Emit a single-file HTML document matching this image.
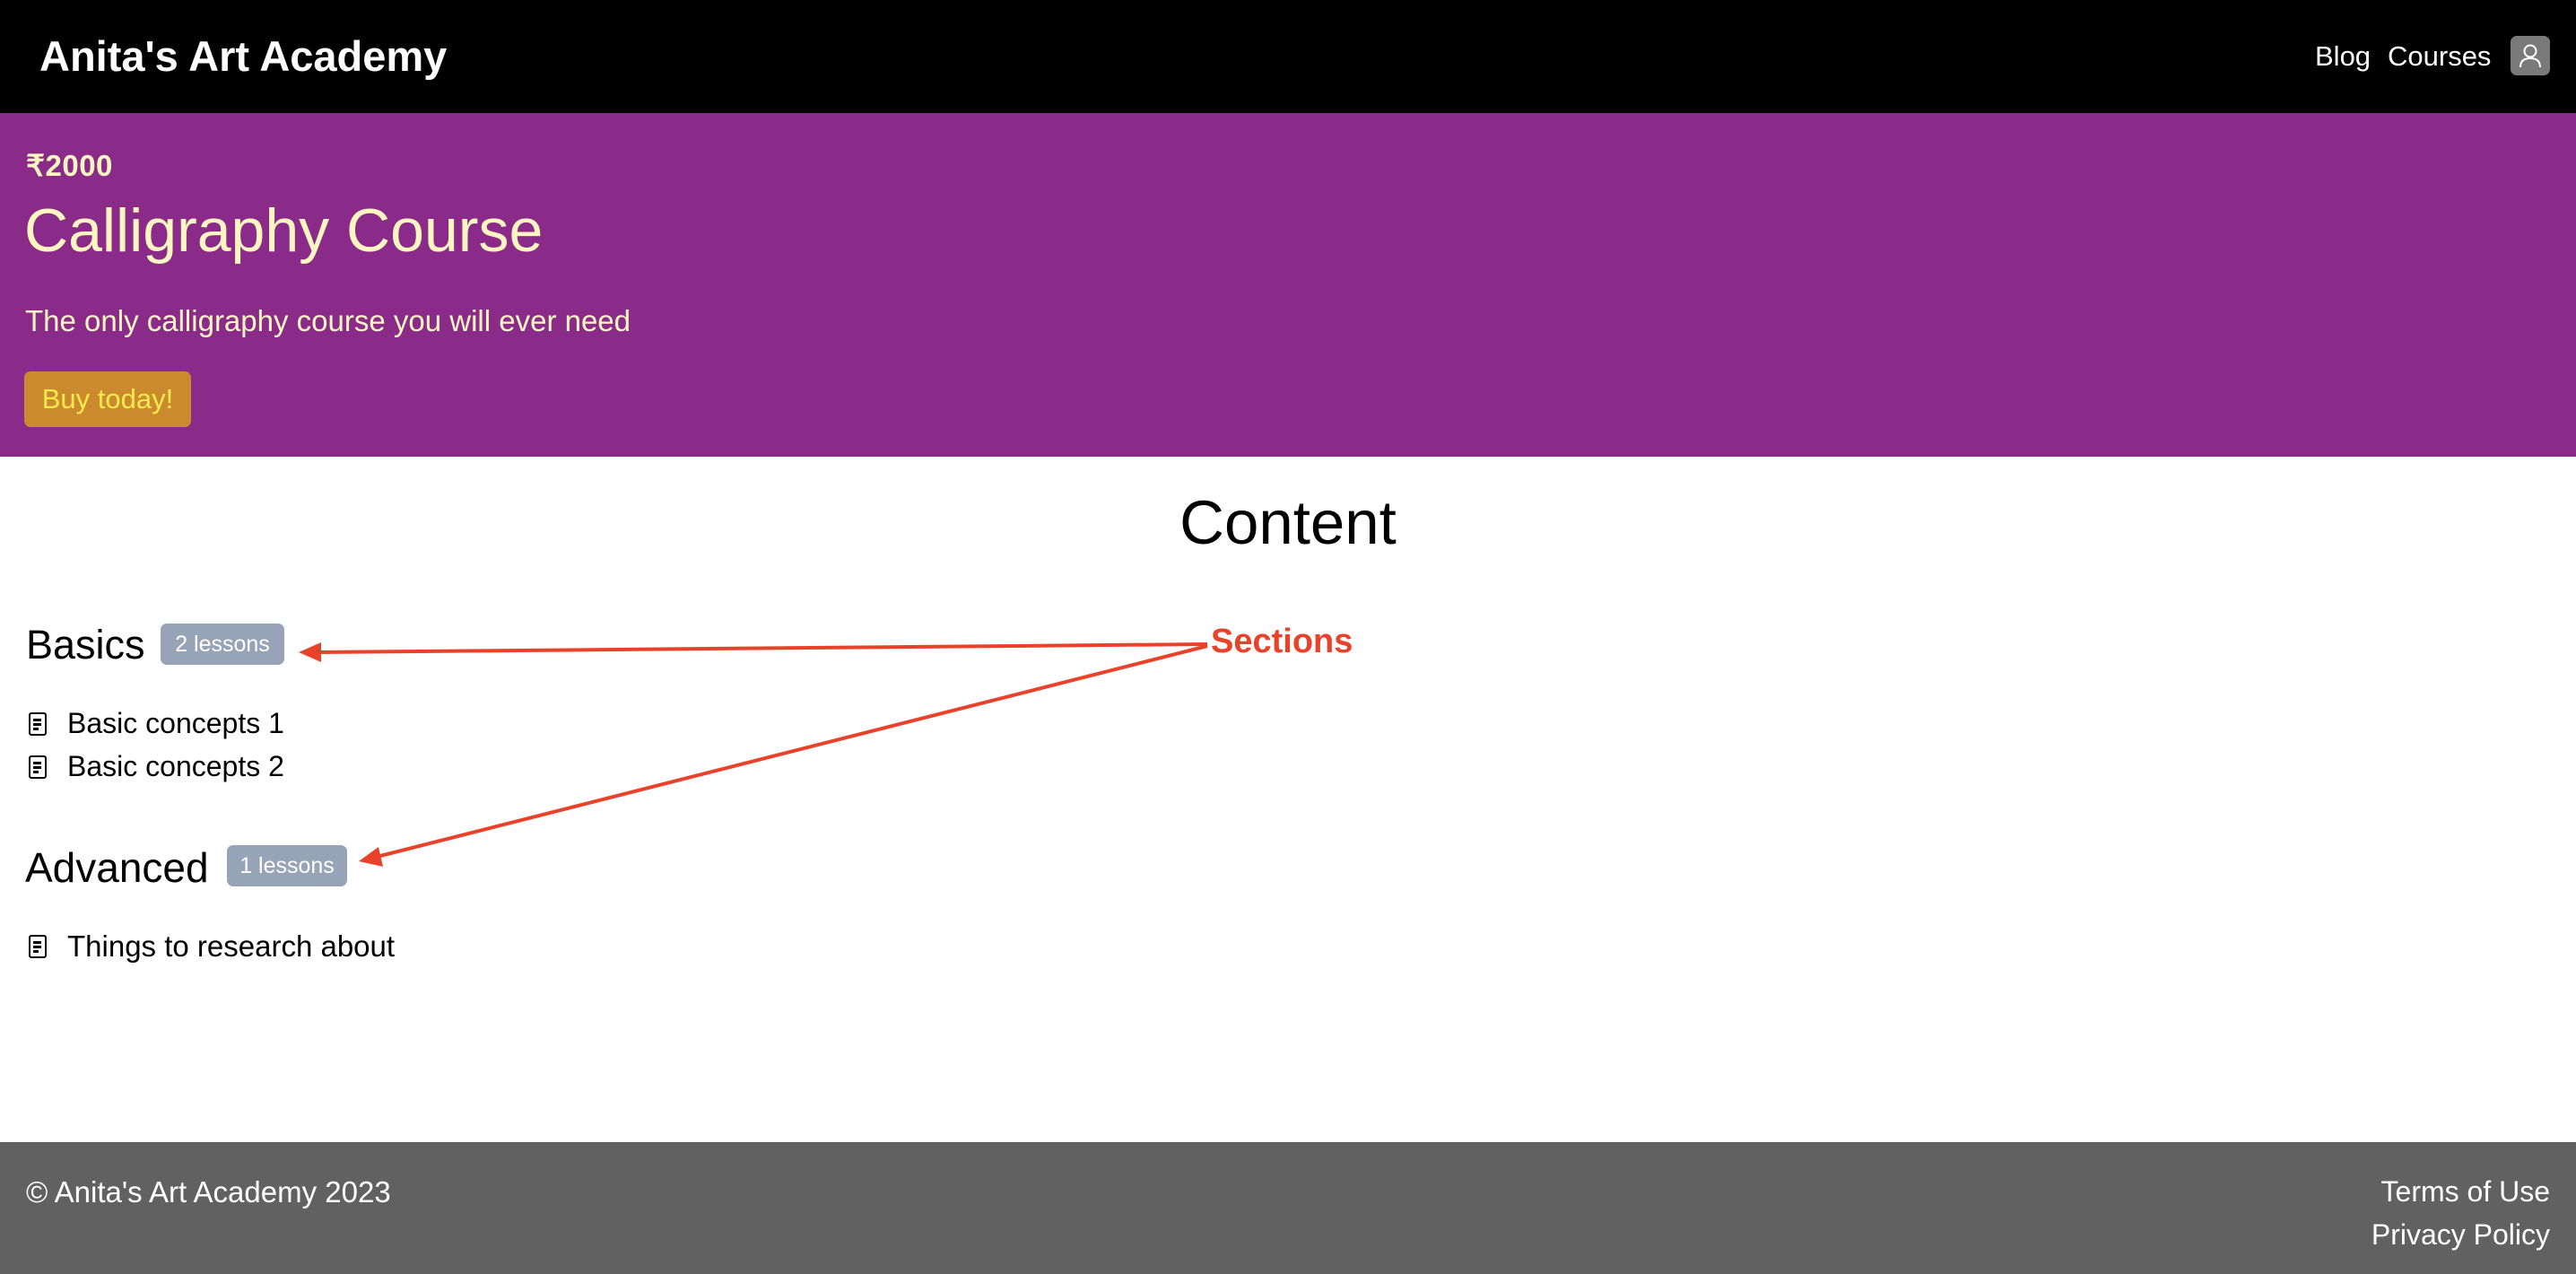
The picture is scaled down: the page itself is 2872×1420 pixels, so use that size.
<!DOCTYPE html>
<html><head><meta charset="utf-8"><style>
*{margin:0;padding:0;box-sizing:border-box}
body{width:2872px;height:1420px;overflow:hidden;background:#fff;font-family:"Liberation Sans",Arial,sans-serif;position:relative}
.abs{position:absolute;white-space:nowrap}
nav{position:absolute;left:0;top:0;width:2872px;height:126px;background:#000}
.hero{position:absolute;left:0;top:126px;width:2872px;height:383px;background:#8a2b8a}
footer{position:absolute;left:0;top:1273px;width:2872px;height:147px;background:#616161}
.badge{position:absolute;background:#97a3b6;color:#fff;border-radius:7px;font-size:25px;display:flex;align-items:center;justify-content:center}
.doc{position:absolute;width:20px;height:26px;border:2.5px solid #000;border-radius:3px}
.doc i{position:absolute;left:3px;height:2.5px;background:#000}
</style></head><body>
<nav>
<div class="abs" style="left:44px;top:35px;font-size:47px;font-weight:bold;color:#fff">Anita's Art Academy</div>
<div class="abs" style="left:2581px;top:45px;font-size:31px;color:#fff">Blog</div>
<div class="abs" style="left:2662px;top:45px;font-size:31px;color:#fff">Courses</div>
<div class="abs" style="left:2799px;top:40px;width:44px;height:44px;background:#7a7a7a;border-radius:7px">
<svg width="44" height="44" viewBox="0 0 44 44"><circle cx="22" cy="17" r="6.5" fill="none" stroke="#fff" stroke-width="2"/><path d="M11 35 Q11 25 22 25 Q33 25 33 35" fill="none" stroke="#fff" stroke-width="2"/></svg></div>
</nav>
<div class="hero">
<div class="abs" style="left:29px;top:39px;font-size:33px;font-weight:bold;color:#fef6c0;letter-spacing:0.5px">₹2000</div>
<div class="abs" style="left:27px;top:92px;font-size:68px;color:#fef6c0">Calligraphy Course</div>
<div class="abs" style="left:28px;top:213px;font-size:33px;color:#fef6c0">The only calligraphy course you will ever need</div>
<div class="abs" style="left:27px;top:288px;width:186px;height:62px;background:#cc8a2e;border-radius:7px;color:#f7ea4c;font-size:31px;display:flex;align-items:center;justify-content:center">Buy today!</div>
</div>
<div class="abs" style="left:0;width:2872px;text-align:center;top:543px;font-size:69px;color:#000">Content</div>
<div class="abs" style="left:29px;top:693px;font-size:45px">Basics</div>
<div class="badge" style="left:179px;top:695px;width:138px;height:46px">2 lessons</div>
<div class="doc" style="left:32px;top:794px"><i style="top:5px;width:9px"></i><i style="top:10px;width:9px"></i><i style="top:15px;width:6px"></i></div>
<div class="abs" style="left:75px;top:788px;font-size:32px">Basic concepts 1</div>
<div class="doc" style="left:32px;top:842px"><i style="top:5px;width:9px"></i><i style="top:10px;width:9px"></i><i style="top:15px;width:6px"></i></div>
<div class="abs" style="left:75px;top:836px;font-size:32px">Basic concepts 2</div>
<div class="abs" style="left:28px;top:940px;font-size:46px">Advanced</div>
<div class="badge" style="left:253px;top:942px;width:134px;height:46px">1 lessons</div>
<div class="doc" style="left:32px;top:1042px"><i style="top:5px;width:9px"></i><i style="top:10px;width:9px"></i><i style="top:15px;width:6px"></i></div>
<div class="abs" style="left:75px;top:1036px;font-size:33px">Things to research about</div>
<svg class="abs" style="left:0;top:0" width="2872" height="1273">
<line x1="1346" y1="718" x2="355" y2="727" stroke="#e8432a" stroke-width="4"/>
<polygon points="333,727 358,716 358,738" fill="#e8432a"/>
<line x1="1346" y1="720" x2="420" y2="955" stroke="#e8432a" stroke-width="4"/>
<polygon points="400,960 422,944 427,966" fill="#e8432a"/>
</svg>
<div class="abs" style="left:1350px;top:694px;font-size:38px;font-weight:bold;color:#e8432a">Sections</div>
<footer>
<div class="abs" style="left:29px;top:37px;font-size:33px;color:#fff">© Anita's Art Academy 2023</div>
<div class="abs" style="right:29px;top:37px;font-size:32px;color:#fff">Terms of Use</div>
<div class="abs" style="right:29px;top:85px;font-size:32px;color:#fff">Privacy Policy</div>
</footer>
</body></html>
